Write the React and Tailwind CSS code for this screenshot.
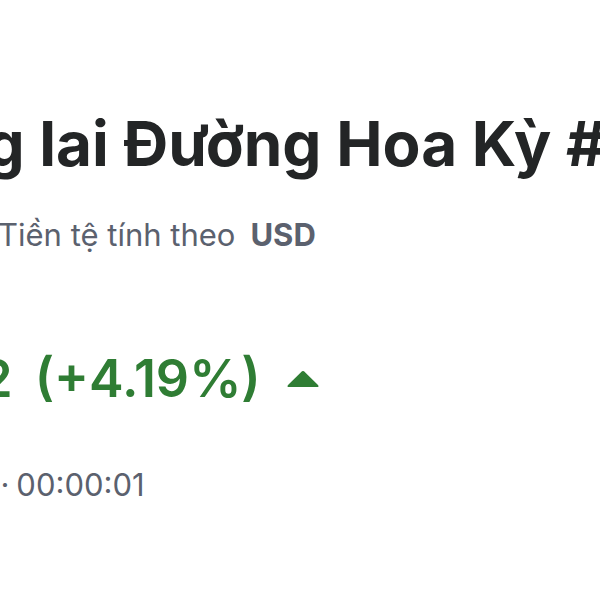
import { useState } from "react";

function UpArrow() {
  return (
    <svg width="34" height="18" viewBox="0 0 34 18" className="shrink-0">
      <path
        d="M15 2.2 Q17 0 19 2.2 L32 15 Q33.5 17 31 17 L3 17 Q0.5 17 2 15 Z"
        fill="#2f7d34"
      />
    </svg>
  );
}

export default function App() {
  const [quote] = useState({
    name: "Hợp đồng Tương lai Đường Hoa Kỳ #11",
    currency: "USD",
    price: "15,21",
    change: "+0,62",
    percent: "(+4.19%)",
    time: "00:00:01",
  });

  return (
    <div
      className="w-[600px] h-[600px] overflow-hidden bg-white text-[#232526]"
      style={{ fontFamily: "Inter, 'Noto Sans', sans-serif" }}
    >
      {/* tên hợp đồng */}
      <h1 className="ml-[-473px] pt-[113px] text-[62px] leading-none font-bold whitespace-nowrap">
        {quote.name}
      </h1>

      {/* tiền tệ */}
      <div className="ml-[-2px] mt-[44px] flex items-baseline gap-[15px] text-[31px] leading-none text-[#5b616e] whitespace-nowrap">
        <span>Tiền tệ tính theo</span>
        <span className="font-bold">{quote.currency}</span>
      </div>

      {/* giá */}
      <div className="ml-[-288px] mt-[103px] flex items-center gap-[25px] whitespace-nowrap">
        <span className="text-[52px] leading-none font-bold">{quote.price}</span>
        <span className="text-[52px] leading-none font-semibold text-[#2f7d34] flex gap-[22px]">
          <span>{quote.change}</span>
          <span>{quote.percent}</span>
        </span>
        <UpArrow />
      </div>

      {/* thời gian */}
      <div className="ml-[-216px] mt-[64px] flex items-center gap-[7px] text-[31px] leading-none text-[#5b616e] whitespace-nowrap">
        <span>Thời gian thực</span>
        <span>·</span>
        <span>{quote.time}</span>
      </div>
    </div>
  );
}
